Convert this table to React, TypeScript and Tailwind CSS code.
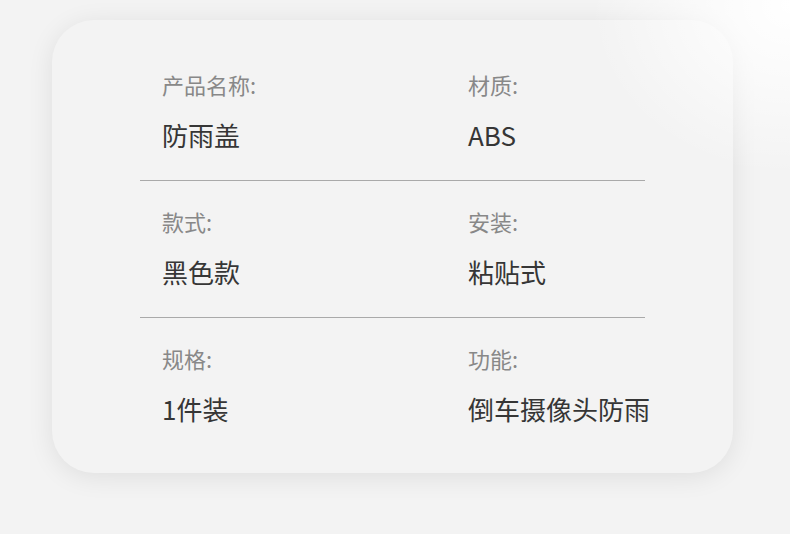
import React from 'react';

// Product spec rows: two columns per row
const SPECS = [
  [
    { label: '产品名称:', value: '防雨盖' },
    { label: '材质:', value: 'ABS' },
  ],
  [
    { label: '款式:', value: '黑色款' },
    { label: '安装:', value: '粘贴式' },
  ],
  [
    { label: '规格:', value: '1件装' },
    { label: '功能:', value: '倒车摄像头防雨' },
  ],
];

const App: React.FC = () => {
  return (
    <div
      className="relative w-[790px] h-[534px] overflow-hidden bg-[#f3f3f3] pt-[20px] pl-[52px]"
      style={{ fontFamily: '"Noto Sans CJK SC", "Noto Sans", sans-serif' }}
    >
      <div className="w-[681px] h-[453px] rounded-[42px] bg-[#f3f3f3] shadow-[0_4px_26px_rgba(0,0,0,0.085)] pt-[24px] pl-[88px]">
        <div className="w-[505px]">
          {SPECS.map((row, i) => (
            <div
              key={i}
              className={
                i < SPECS.length - 1
                  ? 'grid grid-cols-[328px_1fr] h-[137px] pt-[25px] border-b border-[#a9a9a9]'
                  : 'grid grid-cols-[328px_1fr] h-[137px] pt-[25px]'
              }
            >
              {row.map((cell, j) => (
                <div key={cell.label} className={j === 0 ? 'pl-[22px] whitespace-nowrap' : 'whitespace-nowrap'}>
                  <div className="text-[22px] leading-[30px] text-[#888888]">{cell.label}</div>
                  <div className="mt-[18px] text-[26px] leading-[36px] text-[#363636]">{cell.value}</div>
                </div>
              ))}
            </div>
          ))}
        </div>
      </div>
      {/* soft light in the top-right corner */}
      <div className="pointer-events-none absolute inset-0 bg-[radial-gradient(ellipse_200px_170px_at_790px_5px,rgba(255,255,255,1),rgba(255,255,255,0.6)_45%,rgba(255,255,255,0)_100%)]" />
    </div>
  );
};

export default App;
